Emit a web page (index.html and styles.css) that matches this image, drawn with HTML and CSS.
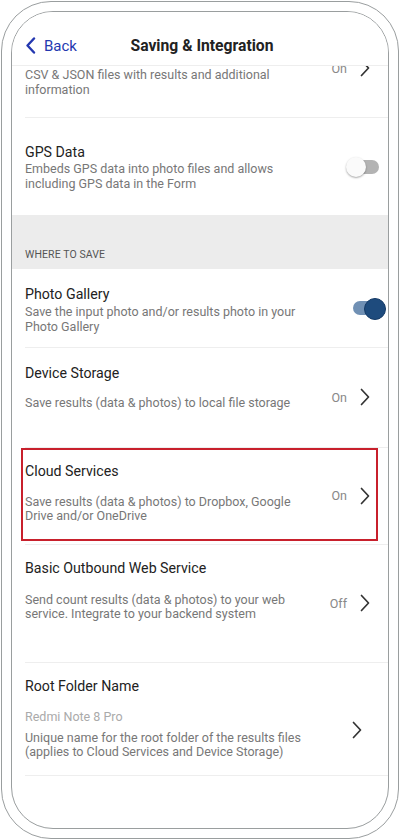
FILE: index.html
```html
<!DOCTYPE html>
<html lang="en">
<head>
<meta charset="utf-8">
<title>Saving &amp; Integration</title>
<link rel="stylesheet" href="styles.css">
</head>
<body>
<div class="device">
  <div class="screen">
    <header class="header">
      <div class="back">
        <svg class="back-icon" width="11" height="17" viewBox="0 0 11 17"><path d="M9 1.5 L2.5 8.5 L9 15.5" fill="none" stroke="#2438b0" stroke-width="2.4" stroke-linecap="round" stroke-linejoin="round"/></svg>
        <span class="back-label">Back</span>
      </div>
      <h1 class="title">Saving &amp; Integration</h1>
      <span></span>
    </header>
    <div class="list">
      <div class="row row-first">
        <div class="row-text pad-first">
          <div class="row-desc">CSV &amp; JSON files with results and additional information</div>
        </div>
        <div class="side"><span class="value">On</span><svg class="chev" width="10" height="18" viewBox="0 0 10 18"><path d="M1.5 1.5 L8.5 9 L1.5 16.5" fill="none" stroke="#333" stroke-width="1.7" stroke-linecap="round" stroke-linejoin="round"/></svg></div>
      </div>
      <div class="row row-plain">
        <div class="row-text pad-gps">
          <div class="row-title">GPS Data</div>
          <div class="row-desc gap-1">Embeds GPS data into photo files and allows including GPS data in the Form</div>
        </div>
        <div class="toggle toggle-off"></div>
      </div>
      <div class="section">WHERE TO SAVE</div>
      <div class="row">
        <div class="row-text pad-photo">
          <div class="row-title">Photo Gallery</div>
          <div class="row-desc gap-2">Save the input photo and/or results photo in your Photo Gallery</div>
        </div>
        <div class="toggle toggle-on"></div>
      </div>
      <div class="row">
        <div class="row-text pad-device">
          <div class="row-title">Device Storage</div>
          <div class="row-desc gap-14">Save results (data &amp; photos) to local file storage</div>
        </div>
        <div class="side"><span class="value">On</span><svg class="chev" width="10" height="18" viewBox="0 0 10 18"><path d="M1.5 1.5 L8.5 9 L1.5 16.5" fill="none" stroke="#333" stroke-width="1.7" stroke-linecap="round" stroke-linejoin="round"/></svg></div>
      </div>
      <div class="row row-highlight">
        <div class="row-text pad-cloud">
          <div class="row-title">Cloud Services</div>
          <div class="row-desc gap-15">Save results (data &amp; photos) to Dropbox, Google Drive and/or OneDrive</div>
        </div>
        <div class="side"><span class="value">On</span><svg class="chev" width="10" height="18" viewBox="0 0 10 18"><path d="M1.5 1.5 L8.5 9 L1.5 16.5" fill="none" stroke="#333" stroke-width="1.7" stroke-linecap="round" stroke-linejoin="round"/></svg></div>
        <div class="highlight-box"></div>
      </div>
      <div class="row">
        <div class="row-text pad-basic">
          <div class="row-title">Basic Outbound Web Service</div>
          <div class="row-desc gap-16">Send count results (data &amp; photos) to your web service. Integrate to your backend system</div>
        </div>
        <div class="side"><span class="value">Off</span><svg class="chev" width="10" height="18" viewBox="0 0 10 18"><path d="M1.5 1.5 L8.5 9 L1.5 16.5" fill="none" stroke="#333" stroke-width="1.7" stroke-linecap="round" stroke-linejoin="round"/></svg></div>
      </div>
      <div class="row">
        <div class="row-text pad-root">
          <div class="row-title">Root Folder Name</div>
          <div class="row-hint gap-14">Redmi Note 8 Pro</div>
          <div class="row-desc gap-7">Unique name for the root folder of the results files (applies to Cloud Services and Device Storage)</div>
        </div>
        <div class="side side-root"><svg class="chev" width="10" height="18" viewBox="0 0 10 18"><path d="M1.5 1.5 L8.5 9 L1.5 16.5" fill="none" stroke="#333" stroke-width="1.7" stroke-linecap="round" stroke-linejoin="round"/></svg></div>
      </div>
    </div>
  </div>
</div>
</body>
</html>
```
FILE: styles.css
```css
* { box-sizing: border-box; }
html, body { margin: 0; padding: 0; background: #fff; }
body { font-family: Roboto, "Liberation Sans", sans-serif; color: #222; }

.device {
  width: 398px;
  height: 838px;
  margin: 1px;
  border: 1px solid #9a9e9f;
  border-radius: 50px;
  padding: 9px;
  background: #fff;
}
.screen {
  height: 100%;
  border: 1px solid #9a9e9f;
  border-radius: 42px;
  overflow: hidden;
  display: flex;
  flex-direction: column;
  background: #fff;
}

.header {
  position: relative;
  z-index: 1;
  flex-shrink: 0;
  height: 54px;
  padding: 14px 13px 0;
  display: grid;
  grid-template-columns: 1fr auto 1fr;
  align-items: center;
  background: #fff;
  border-bottom: 1px solid #eeeeee;
}
.back {
  display: flex;
  align-items: center;
  gap: 8px;
  color: #2438b0;
}
.back-label { font-size: 15px; line-height: 20px; }
.back-icon { display: block; flex-shrink: 0; }
.title {
  margin: 0;
  padding-left: 4px;
  font-size: 15.7px;
  line-height: 20px;
  font-weight: 700;
  color: #222;
  white-space: nowrap;
}

.list { flex: 1; overflow: hidden; }

.row {
  position: relative;
  display: flex;
  align-items: center;
  margin-left: 13px;
  border-bottom: 1px solid #eeeeee;
}
.row-plain { border-bottom: none; }
.row-first { margin-top: -47px; }

.row-text { flex: 1; max-width: 285px; }
.row-title { font-size: 14.2px; line-height: 18px; color: #222; }
.row-desc { font-size: 12.5px; line-height: 14.5px; color: #777; }
.row-hint { font-size: 12.5px; line-height: 15px; color: #aaa; }

.gap-1 { margin-top: 1px; }
.gap-2 { margin-top: 2px; }
.gap-7 { margin-top: 7px; }
.gap-14 { margin-top: 14px; }
.gap-15 { margin-top: 15px; }
.gap-16 { margin-top: 16px; }

.pad-first { padding: 49px 0 20px; }
.pad-gps { padding: 25px 0 24px; }
.pad-photo { padding: 16px 0 13px; }
.pad-device { padding: 16px 0 36px; }
.pad-cloud { padding: 14px 0 20px; }
.pad-basic { padding: 14px 0 40px; }
.pad-root { padding: 14px 0 15px; }

.side {
  margin-left: auto;
  margin-right: 18px;
  display: flex;
  align-items: center;
  gap: 13px;
  flex-shrink: 0;
}
.side-root { margin-right: 26px; margin-top: 22px; }
.value { font-size: 12.5px; color: #888; }
.chev { display: block; }

.section {
  height: 54px;
  padding: 0 13px 7px;
  display: flex;
  align-items: flex-end;
  background: #ececec;
  font-size: 10.5px;
  line-height: 15px;
  color: #555;
  letter-spacing: 0.1px;
}

.toggle {
  position: relative;
  width: 33px;
  height: 20px;
  margin-left: auto;
  flex-shrink: 0;
}
.toggle::before {
  content: "";
  position: absolute;
  top: 3px;
  height: 14px;
  border-radius: 7px;
}
.toggle::after {
  content: "";
  position: absolute;
  top: 0;
  width: 20px;
  height: 20px;
  border-radius: 50%;
}
.toggle-off { margin-right: 9px; }
.toggle-off::before { left: 3px; right: 0; background: #b3b3b3; }
.toggle-off::after { left: 0; background: #fafafa; box-shadow: 0 1px 2px rgba(0,0,0,0.35); }
.toggle-on { margin-right: 2px; }
.toggle-on::before { left: 0; right: 6px; background: #7090b4; }
.toggle-on::after { right: 0; background: #1e4b7d; border: 1px solid #143a66; }

.highlight-box {
  position: absolute;
  left: -4px;
  right: 10px;
  top: 0;
  bottom: 3px;
  border: 2px solid #c8202c;
  pointer-events: none;
}
```
